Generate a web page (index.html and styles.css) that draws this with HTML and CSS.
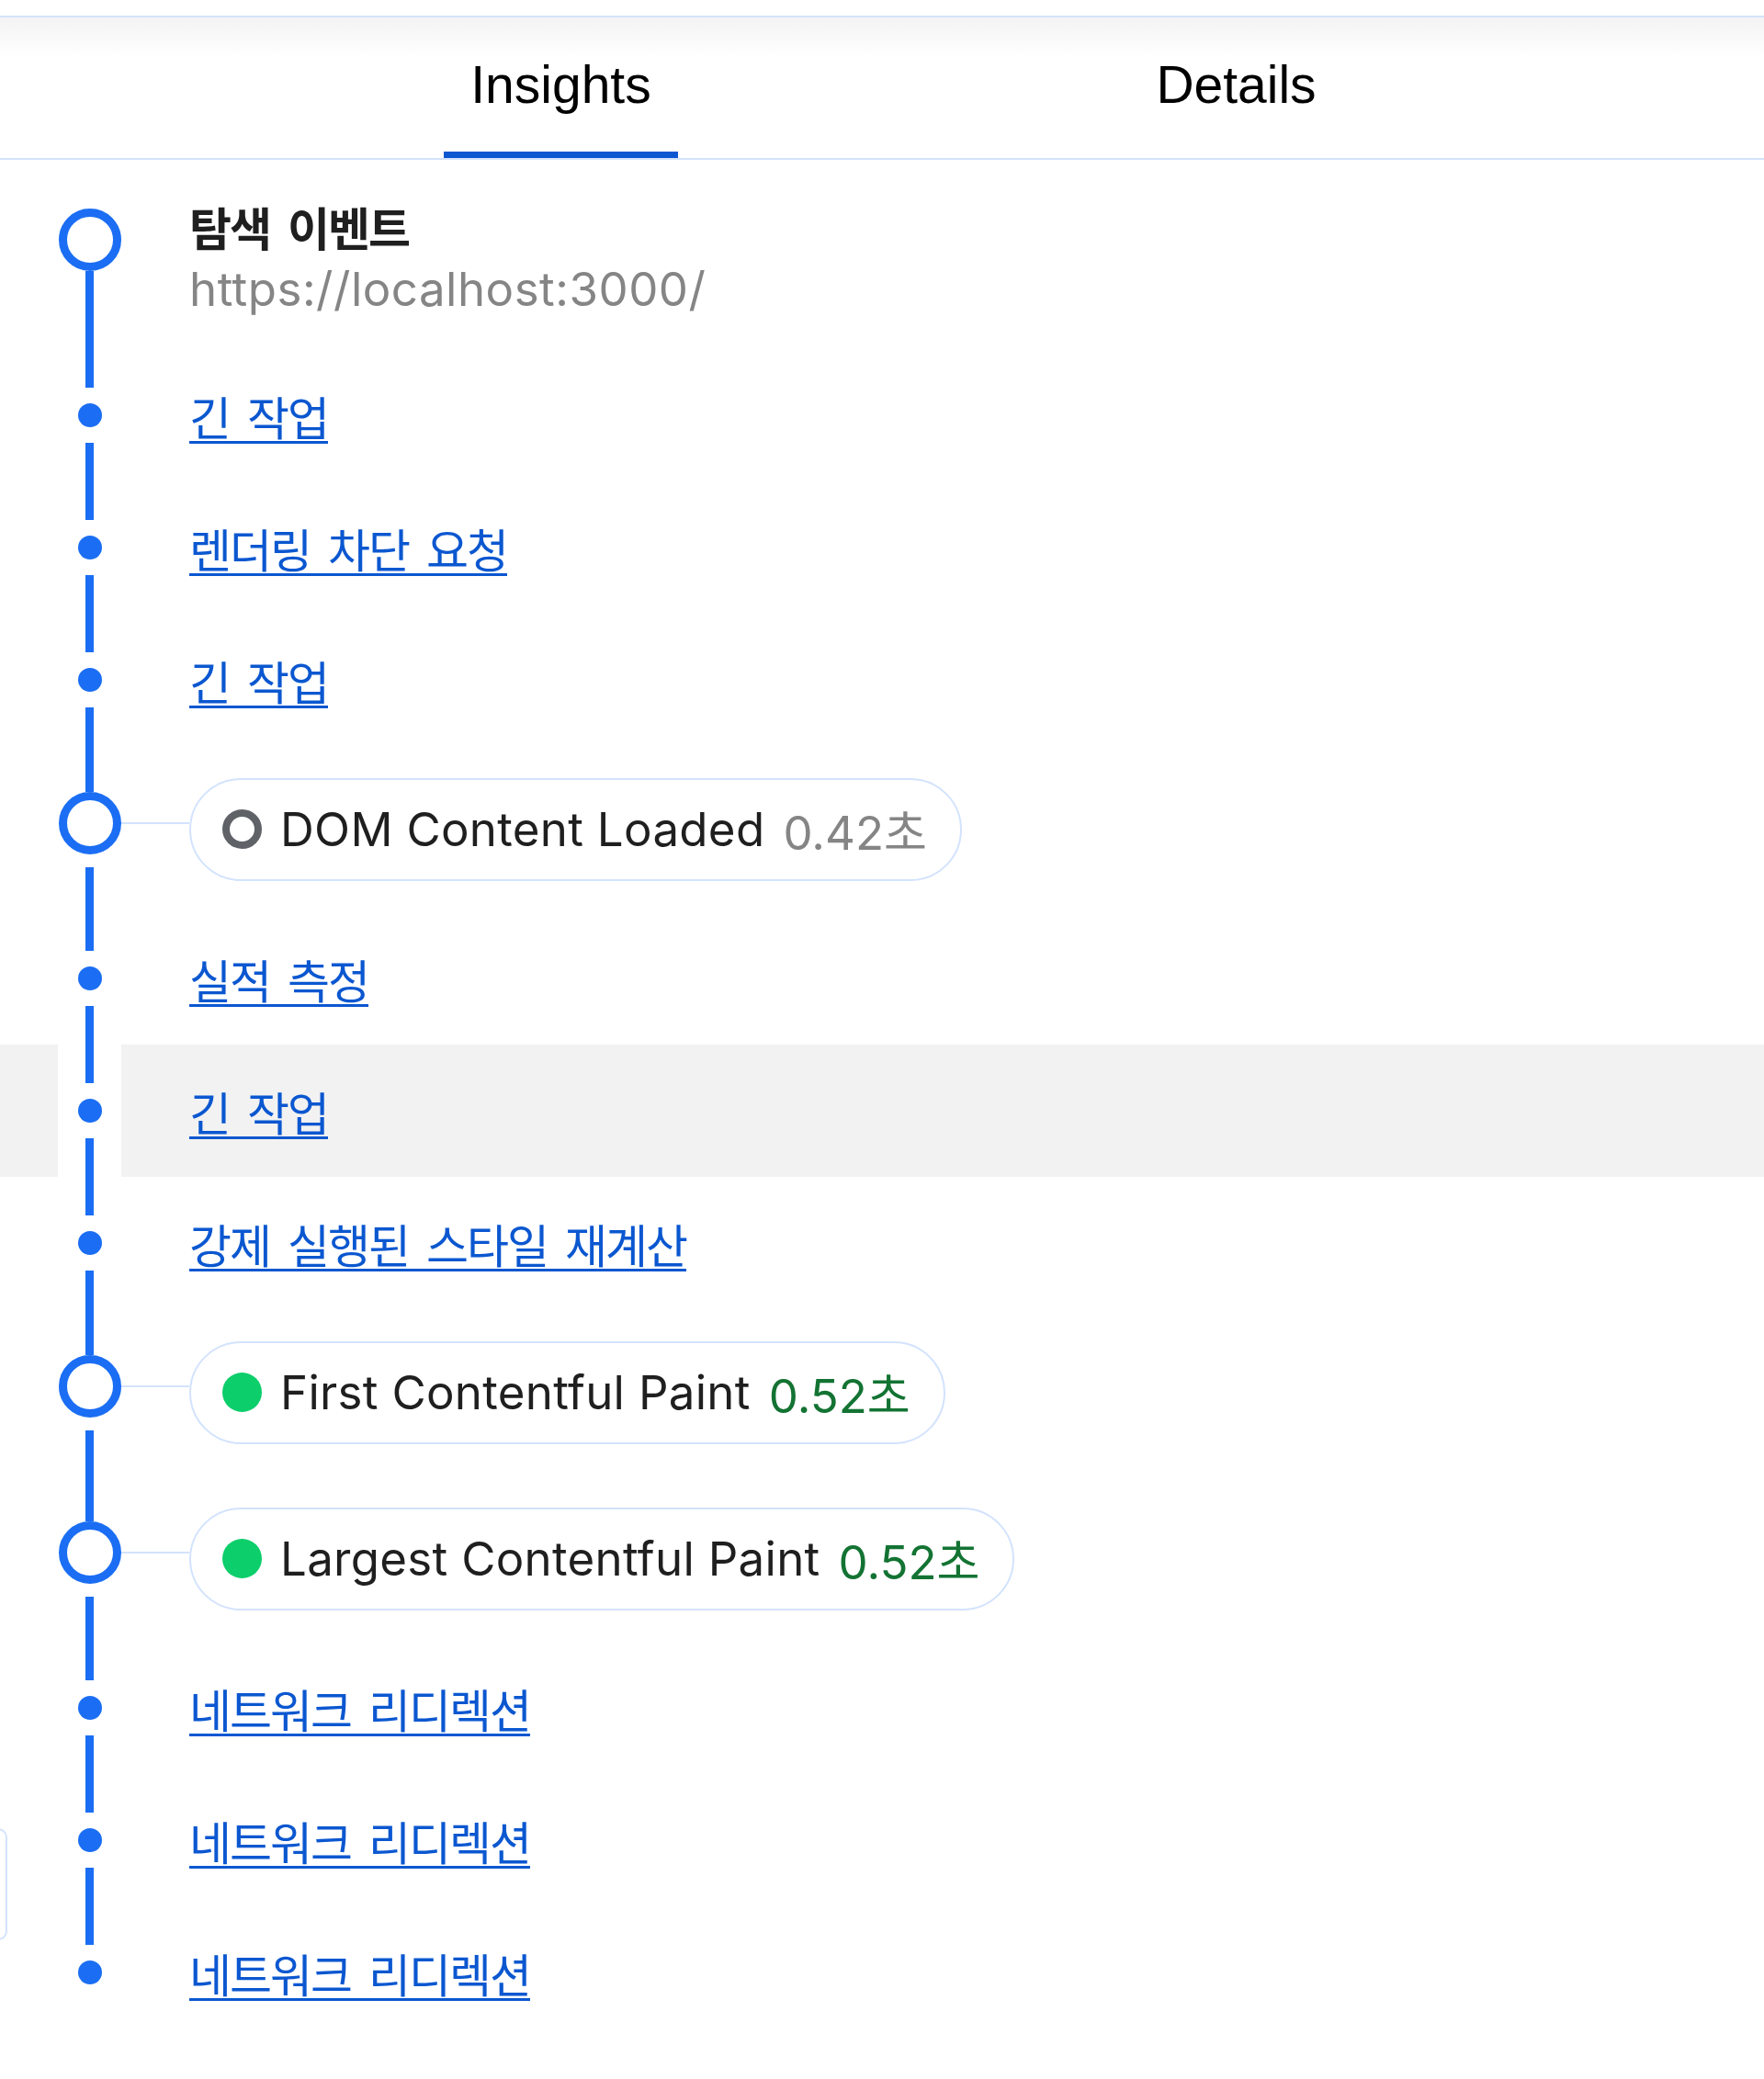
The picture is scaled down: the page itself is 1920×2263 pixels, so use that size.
FILE: index.html
```html
<!DOCTYPE html>
<html lang="ko">
<head>
<meta charset="utf-8">
<title>Insights</title>
<link rel="stylesheet" href="styles.css">
</head>
<body>
<div class="page">
  <div class="tabbar">
    <div class="tabs">
      <div class="tab active"><span class="tab-label">Insights</span></div>
      <div class="tab"><span class="tab-label">Details</span></div>
    </div>
  </div>

  <div class="side-box"></div>

  <ol class="timeline">
    <li class="row nav">
      <div class="rail"><span class="ring"></span><span class="seg"></span></div>
      <div class="spacer"></div>
      <div class="nav-text">
        <div class="title">탐색 이벤트</div>
        <div class="url">https://localhost:3000/</div>
      </div>
    </li>
    <li class="row item">
      <div class="rail"><span class="seg"></span><span class="dot"></span><span class="seg"></span></div>
      <div class="spacer"></div>
      <a class="link" href="#">긴 작업</a>
    </li>
    <li class="row item">
      <div class="rail"><span class="seg"></span><span class="dot"></span><span class="seg"></span></div>
      <div class="spacer"></div>
      <a class="link" href="#">렌더링 차단 요청</a>
    </li>
    <li class="row item">
      <div class="rail"><span class="seg"></span><span class="dot"></span><span class="seg"></span></div>
      <div class="spacer"></div>
      <a class="link" href="#">긴 작업</a>
    </li>
    <li class="row metric">
      <div class="rail"><span class="seg"></span><span class="ring"></span><span class="seg"></span></div>
      <div class="connector"></div>
      <div class="pill">
        <span class="icon icon-ring"></span>
        <span class="label">DOM Content Loaded</span>
        <span class="value value-gray">0.42초</span>
      </div>
    </li>
    <li class="row item">
      <div class="rail"><span class="seg"></span><span class="dot"></span><span class="seg"></span></div>
      <div class="spacer"></div>
      <a class="link" href="#">실적 측정</a>
    </li>
    <li class="row item hover">
      <div class="rail"><span class="seg"></span><span class="dot"></span><span class="seg"></span></div>
      <div class="spacer"></div>
      <a class="link" href="#">긴 작업</a>
    </li>
    <li class="row item">
      <div class="rail"><span class="seg"></span><span class="dot"></span><span class="seg"></span></div>
      <div class="spacer"></div>
      <a class="link" href="#">강제 실행된 스타일 재계산</a>
    </li>
    <li class="row metric">
      <div class="rail"><span class="seg"></span><span class="ring"></span><span class="seg"></span></div>
      <div class="connector"></div>
      <div class="pill">
        <span class="icon icon-good"></span>
        <span class="label">First Contentful Paint</span>
        <span class="value value-good">0.52초</span>
      </div>
    </li>
    <li class="row metric">
      <div class="rail"><span class="seg"></span><span class="ring"></span><span class="seg"></span></div>
      <div class="connector"></div>
      <div class="pill">
        <span class="icon icon-good"></span>
        <span class="label">Largest Contentful Paint</span>
        <span class="value value-good">0.52초</span>
      </div>
    </li>
    <li class="row item">
      <div class="rail"><span class="seg"></span><span class="dot"></span><span class="seg"></span></div>
      <div class="spacer"></div>
      <a class="link" href="#">네트워크 리디렉션</a>
    </li>
    <li class="row item">
      <div class="rail"><span class="seg"></span><span class="dot"></span><span class="seg"></span></div>
      <div class="spacer"></div>
      <a class="link" href="#">네트워크 리디렉션</a>
    </li>
    <li class="row item last">
      <div class="rail"><span class="seg"></span><span class="dot"></span><span class="seg"></span></div>
      <div class="spacer"></div>
      <a class="link" href="#">네트워크 리디렉션</a>
    </li>
  </ol>
</div>
</body>
</html>
```

FILE: styles.css
```css
html, body {
  margin: 0;
  padding: 0;
  background: #ffffff;
}

.page {
  position: relative;
  width: 1920px;
  height: 2263px;
  overflow: hidden;
  font-family: Inter, "Noto Sans CJK KR", sans-serif;
  color: #1f1f1f;
}

/* ---------- tabs ---------- */
.tabbar {
  margin-top: 17px;
  border-top: 2px solid #d3e3fd;
  border-bottom: 2px solid #d3e3fd;
  background: linear-gradient(#f3f3f3 0px, #ffffff 42px);
}

.tabs {
  display: flex;
  padding-left: 243px;
  width: 1470px;
}

.tab {
  flex: 1;
  display: flex;
  justify-content: center;
}

.tab-label {
  box-sizing: border-box;
  height: 153px;
  display: flex;
  align-items: center;
  padding: 0 29px;
  border-bottom: 7px solid transparent;
  font-family: "Liberation Sans", Arial, sans-serif;
  font-size: 57px;
  color: #000000;
}

.tab.active .tab-label {
  border-bottom-color: #0b57d0;
}

/* ---------- timeline ---------- */
.timeline {
  list-style: none;
  margin: 0;
  padding: 0;
}

.row {
  display: flex;
  align-items: center;
}

.rail {
  align-self: stretch;
  width: 69px;
  margin-left: 63px;
  display: flex;
  flex-direction: column;
  align-items: center;
  background: #ffffff;
  flex-shrink: 0;
}

.seg {
  flex: 1;
  width: 9px;
  background: #1b6ef3;
}

.ring {
  box-sizing: border-box;
  width: 68px;
  height: 68px;
  border: 9px solid #1b6ef3;
  border-radius: 50%;
  flex-shrink: 0;
}

.dot {
  width: 26px;
  height: 26px;
  border-radius: 50%;
  background: #1b6ef3;
  margin: 17px 0;
  flex-shrink: 0;
}

.spacer {
  width: 74px;
  flex-shrink: 0;
}

.connector {
  width: 74px;
  height: 2px;
  background: #d3e3fd;
  flex-shrink: 0;
  margin-bottom: 14px;
}

/* nav row */
.row.nav {
  height: 206px;
  align-items: flex-start;
}

.row.nav .ring {
  margin-top: 53px;
}

.nav-text {
  padding-top: 42px;
  font-size: 51px;
  line-height: 66px;
}

.title {
  font-family: "Noto Sans CJK KR", sans-serif;
  font-weight: 700;
  font-size: 50px;
  line-height: 60px;
  margin-bottom: 6px;
  letter-spacing: -2px;
  word-spacing: 7px;
  color: #1f1f1f;
}

.url {
  color: #858585;
  letter-spacing: 0.5px;
}

/* link rows */
.row.item {
  height: 144px;
}

.row.hover {
  background: #f2f2f2;
}

.row.last .rail .seg:last-child {
  visibility: hidden;
}

.link {
  font-family: "Noto Sans CJK KR", sans-serif;
  font-size: 50px;
  letter-spacing: -2px;
  word-spacing: 7px;
  color: #0b57d0;
  text-decoration: underline;
  text-decoration-thickness: 3px;
  text-underline-offset: 6px;
}

/* metric rows */
.row.metric {
  height: 181px;
}

.row.metric .ring {
  margin-bottom: 14px;
}

.pill {
  box-sizing: border-box;
  height: 112px;
  display: flex;
  align-items: center;
  padding: 0 36px 0 34px;
  border: 2px solid #d3e3fd;
  border-radius: 56px;
  font-size: 51px;
  letter-spacing: 0.3px;
  white-space: nowrap;
}

.icon {
  box-sizing: border-box;
  width: 43px;
  height: 43px;
  border-radius: 50%;
  margin-right: 20px;
  flex-shrink: 0;
}

.icon-ring {
  border: 8px solid #5f6368;
}

.icon-good {
  background: #0cce6b;
}

.label {
  color: #1f1f1f;
}

.value {
  margin-left: 20px;
  letter-spacing: 0;
}

.value-gray {
  color: #858585;
}

.value-good {
  color: #137333;
}

/* partial box peeking in from the left edge */
.side-box {
  position: absolute;
  left: -120px;
  top: 1990px;
  width: 128px;
  height: 122px;
  box-sizing: border-box;
  border: 2px solid #d3e3fd;
  border-radius: 10px;
}
```
